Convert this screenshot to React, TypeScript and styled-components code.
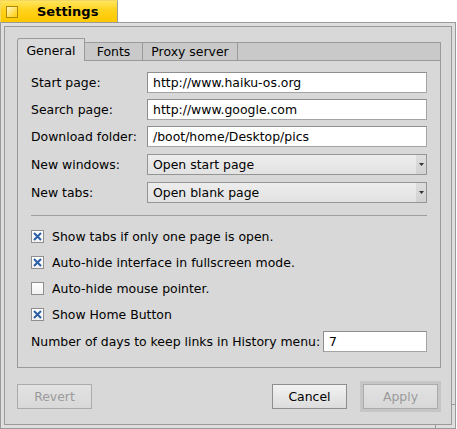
import styled, { createGlobalStyle } from 'styled-components'

const GlobalStyle = createGlobalStyle`
  html, body {
    margin: 0;
    padding: 0;
    background: #ffffff;
  }
  body {
    font-family: 'DejaVu Sans', 'Noto Sans', sans-serif;
    font-size: 12.45px;
    color: #000;
  }
`

const Page = styled.div`
  width: 457px;
  height: 429px;
  display: flex;
  flex-direction: column;
`

const TitleTab = styled.div`
  box-sizing: border-box;
  width: 118px;
  height: 22px;
  display: flex;
  align-items: center;
  padding-left: 5px;
  background: linear-gradient(#ffe55e, #ffd21a 45%, #ffc800);
  border: 1px solid #f3d860;
  border-right-color: #9c9c9c;
  border-bottom: none;
`

const CloseBox = styled.div`
  box-sizing: border-box;
  width: 12px;
  height: 12px;
  border: 1px solid #b08a00;
  background: linear-gradient(135deg, #fff6c8, #ffd83a 70%, #ffcc00);
`

const Title = styled.span`
  margin-left: 19px;
  font-size: 13px;
  font-weight: bold;
`

const Frame = styled.div`
  position: relative;
  box-sizing: border-box;
  width: 456px;
  height: 407px;
  padding: 3px;
  border: 1px solid #9a9a9a;
  background: #dedede;
`

const ResizeMark = styled.span<{ $vertical?: boolean }>`
  position: absolute;
  background: #9a9a9a;
  ${(p) =>
    p.$vertical
      ? 'left: 434px; bottom: -1px; width: 1px; height: 5px;'
      : 'right: -1px; top: 381px; width: 5px; height: 1px;'}
`

const Body = styled.div`
  box-sizing: border-box;
  height: 100%;
  padding: 11px 10px 0 12px;
  border: 1px solid #9a9a9a;
  background: #d8d8d8;
  display: flex;
  flex-direction: column;
`

const TabStrip = styled.div`
  display: flex;
  align-items: flex-end;
  height: 23px;
`

const Tab = styled.div<{ $active?: boolean; $width: number }>`
  box-sizing: border-box;
  width: ${(p) => p.$width}px;
  height: ${(p) => (p.$active ? 23 : 19)}px;
  display: flex;
  align-items: center;
  justify-content: center;
  border: 1px solid #9a9a9a;
  border-left: ${(p) => (p.$active ? '1px solid #9a9a9a' : 'none')};
  border-bottom: ${(p) => (p.$active ? 'none' : '1px solid #9a9a9a')};
  border-top-left-radius: ${(p) => (p.$active ? 3 : 0)}px;
  background: ${(p) => (p.$active ? '#dadada' : '#c9c9c9')};
  padding-top: ${(p) => (p.$active ? 1 : 0)}px;
`

const TabFill = styled.div`
  flex: 1;
  box-sizing: border-box;
  height: 19px;
  border: 1px solid #9a9a9a;
  border-left: none;
  background: #c9c9c9;
`

const Panel = styled.div`
  box-sizing: border-box;
  height: 307px;
  padding: 11px 13px 0 13px;
  border: 1px solid #9a9a9a;
  border-top: none;
  display: flex;
  flex-direction: column;
`

const FieldGrid = styled.div`
  display: grid;
  grid-template-columns: 116px 1fr;
  row-gap: 6px;
  align-items: center;
`

const Label = styled.span`
  white-space: nowrap;
`

const TextField = styled.div<{ $width?: number }>`
  box-sizing: border-box;
  height: 21px;
  ${(p) => (p.$width ? `width: ${p.$width}px;` : '')}
  padding-left: 5px;
  display: flex;
  align-items: center;
  background: #ffffff;
  border: 1px solid #8e8e8e;
  border-right-color: #a4a4a4;
  border-bottom-color: #a4a4a4;
  white-space: nowrap;
`

const MenuField = styled.div`
  box-sizing: border-box;
  height: 21px;
  display: flex;
  align-items: stretch;
  border: 1px solid #959595;
  background: linear-gradient(#ededed, #e2e2e2);
  margin-top: 1px;
`

const MenuText = styled.span`
  flex: 1;
  display: flex;
  align-items: center;
  padding-left: 5px;
`

const MenuArrow = styled.span`
  width: 10px;
  display: flex;
  align-items: center;
  justify-content: center;
  background: linear-gradient(#dedede, #d2d2d2);
`

const Separator = styled.div`
  height: 1px;
  margin-top: 12px;
  background: #9e9e9e;
`

const Checks = styled.div`
  display: flex;
  flex-direction: column;
  gap: 13px;
  margin-top: 14px;
`

const CheckRow = styled.div`
  display: flex;
  align-items: center;
  height: 13px;
  gap: 8px;
`

const Box = styled.span`
  box-sizing: border-box;
  width: 13px;
  height: 13px;
  flex: none;
  display: flex;
  align-items: center;
  justify-content: center;
  border: 1px solid #8e8e8e;
  background: linear-gradient(#ffffff, #f2f2f2);
`

const NumberRow = styled.div`
  display: flex;
  align-items: center;
  margin-top: 10px;
`

const ButtonRow = styled.div`
  display: flex;
  align-items: center;
  height: 31px;
  margin-top: 13px;
`

const Button = styled.div<{ $disabled?: boolean }>`
  box-sizing: border-box;
  width: 75px;
  height: 25px;
  display: flex;
  align-items: center;
  justify-content: center;
  border: 1px solid ${(p) => (p.$disabled ? '#ababab' : '#8e8e8e')};
  background: ${(p) =>
    p.$disabled
      ? 'linear-gradient(#e2e2e2, #d8d8d8)'
      : 'linear-gradient(#f2f2f2, #dcdcdc)'};
  color: ${(p) => (p.$disabled ? '#9a9a9a' : '#000')};
`

const DefaultFrame = styled.div`
  padding: 3px;
  margin-left: 13px;
  background: #c6c6c6;
`

const Spacer = styled.div`
  flex: 1;
`

const Check = ({ checked, label }: { checked: boolean; label: string }) => (
  <CheckRow>
    <Box>
      {checked && (
        <svg width="9" height="9" viewBox="0 0 9 9">
          <path d="M1 1 L8 8 M8 1 L1 8" stroke="#2c5ea6" strokeWidth="2" />
        </svg>
      )}
    </Box>
    <span>{label}</span>
  </CheckRow>
)

const Menu = ({ value }: { value: string }) => (
  <MenuField>
    <MenuText>{value}</MenuText>
    <MenuArrow>
      <svg width="5" height="3" viewBox="0 0 5 3">
        <path d="M0 0 H5 L2.5 3 Z" fill="#333" />
      </svg>
    </MenuArrow>
  </MenuField>
)

export default function App() {
  return (
    <Page>
      <GlobalStyle />
      <TitleTab>
        <CloseBox />
        <Title>Settings</Title>
      </TitleTab>
      <Frame>
        <Body>
          <TabStrip>
            <Tab $active $width={68}>General</Tab>
            <Tab $width={58}>Fonts</Tab>
            <Tab $width={95}>Proxy server</Tab>
            <TabFill />
          </TabStrip>
          <Panel>
            <FieldGrid>
              <Label>Start page:</Label>
              <TextField>http://www.haiku-os.org</TextField>
              <Label>Search page:</Label>
              <TextField>http://www.google.com</TextField>
              <Label>Download folder:</Label>
              <TextField>/boot/home/Desktop/pics</TextField>
              <Label>New windows:</Label>
              <Menu value="Open start page" />
              <Label>New tabs:</Label>
              <Menu value="Open blank page" />
            </FieldGrid>
            <Separator />
            <Checks>
              <Check checked label="Show tabs if only one page is open." />
              <Check checked label="Auto-hide interface in fullscreen mode." />
              <Check checked={false} label="Auto-hide mouse pointer." />
              <Check checked label="Show Home Button" />
            </Checks>
            <NumberRow>
              <Label>Number of days to keep links in History menu:</Label>
              <Spacer />
              <TextField $width={104}>7</TextField>
            </NumberRow>
          </Panel>
          <ButtonRow>
            <Button $disabled>Revert</Button>
            <Spacer />
            <Button>Cancel</Button>
            <DefaultFrame>
              <Button $disabled>Apply</Button>
            </DefaultFrame>
          </ButtonRow>
        </Body>
        <ResizeMark $vertical />
        <ResizeMark />
      </Frame>
    </Page>
  )
}
